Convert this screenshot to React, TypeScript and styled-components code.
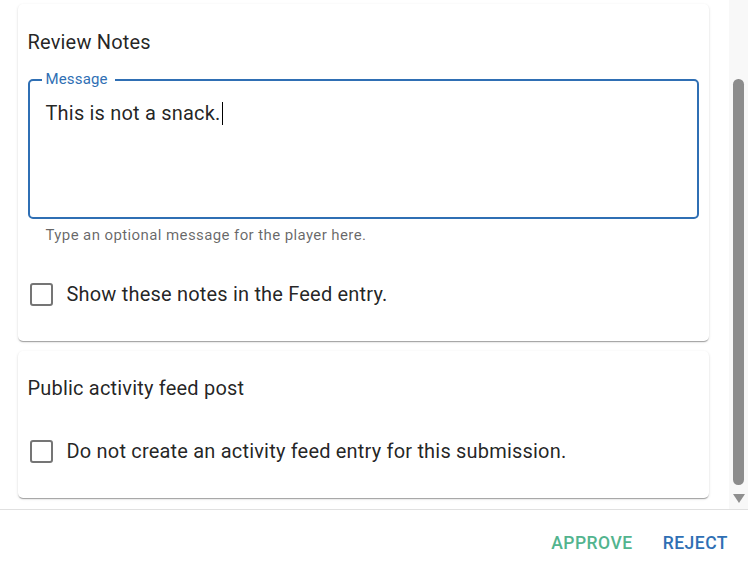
import styled, { createGlobalStyle } from 'styled-components';

const GlobalStyle = createGlobalStyle`
	html, body {
		margin: 0;
		height: 564px;
		overflow: hidden;
		background: #fff;
		font-family: Roboto, 'Liberation Sans', sans-serif;
		color: rgba(0, 0, 0, 0.87);
	}
`;

const BLUE = '#2f6fb4';
const GREEN = '#52b48e';

const Dialog = styled.div`
	display: flex;
	flex-direction: column;
	height: 564px;
`;

const Body = styled.div`
	display: flex;
	height: 509px;
	flex-shrink: 0;
`;

const Content = styled.div`
	flex: 1;
	display: flex;
	flex-direction: column;
	gap: 10px;
	padding: 4px 20.5px 0 17.5px;
	overflow: hidden;
`;

const Card = styled.section`
	background: #fff;
	border-radius: 5px;
	padding: 22.5px 10px 20.5px;
	box-shadow: 0 2px 1px -1px rgba(0, 0, 0, 0.2), 0 1px 1px 0 rgba(0, 0, 0, 0.14),
		0 1px 3px 0 rgba(0, 0, 0, 0.12);
`;

const Heading = styled.h2`
	margin: 0 0 22px;
	font-size: 20px;
	font-weight: 400;
	line-height: 30px;
	letter-spacing: 0.19px;
`;

const Field = styled.div`
	position: relative;
	box-sizing: border-box;
	height: 140.5px;
	border: 2px solid ${BLUE};
	border-radius: 5px;
	padding: 18px 16px;
`;

const FieldLabel = styled.label`
	position: absolute;
	top: -9px;
	left: 12px;
	padding: 0 7px 0 4px;
	background: #fff;
	color: ${BLUE};
	font-size: 15px;
	line-height: 15px;
	letter-spacing: 0.15px;
`;

const InputText = styled.div`
	font-size: 20px;
	line-height: 29px;
	letter-spacing: 0.19px;
`;

const Caret = styled.span`
	display: inline-block;
	width: 1px;
	height: 23px;
	margin-left: 1.5px;
	vertical-align: -5px;
	background: #000;
`;

const Helper = styled.p`
	margin: 4.4px 0 20px 18px;
	font-size: 15px;
	line-height: 25px;
	letter-spacing: 0.4px;
	color: rgba(0, 0, 0, 0.6);
`;

const CheckRow = styled.label`
	display: flex;
	align-items: center;
	height: 52px;
	padding-left: 2.5px;
	font-size: 20px;
	line-height: 30px;
	letter-spacing: 0.19px;
`;

const Box = styled.span`
	box-sizing: border-box;
	width: 22.5px;
	height: 22.5px;
	border: 2.5px solid #757575;
	border-radius: 3px;
	margin-right: 14px;
	flex-shrink: 0;
`;

const ScrollTrack = styled.div`
	width: 19px;
	background: #f8f8f8;
	display: flex;
	flex-direction: column;
	align-items: center;
`;

const Thumb = styled.div`
	margin-top: 79px;
	width: 10.5px;
	height: 406px;
	border-radius: 5.25px;
	background: #8c8c8c;
`;

const DownArrow = styled.div`
	margin-top: 9px;
	width: 0;
	height: 0;
	border-left: 6.5px solid transparent;
	border-right: 6.5px solid transparent;
	border-top: 9px solid #8f8f8f;
`;

const Footer = styled.div`
	display: flex;
	justify-content: flex-end;
	gap: 10px;
	padding: 10px;
	border-top: 1px solid #e0e0e0;
`;

const ActionButton = styled.button<{ $tone: 'approve' | 'reject' }>`
	border: 0;
	background: none;
	height: 45.5px;
	padding: 7.5px 10px;
	font-family: Roboto, 'Liberation Sans', sans-serif;
	font-size: 17.5px;
	font-weight: 500;
	letter-spacing: 0.5px;
	text-transform: uppercase;
	color: ${(p) => (p.$tone === 'approve' ? GREEN : BLUE)};
	cursor: pointer;
`;

const App = () => {
	return (
		<>
			<GlobalStyle />
			<Dialog>
				<Body>
					<Content>
						<Card>
							<Heading>Review Notes</Heading>
							<Field>
								<FieldLabel>Message</FieldLabel>
								<InputText>
									This is not a snack.
									<Caret />
								</InputText>
							</Field>
							<Helper>Type an optional message for the player here.</Helper>
							<CheckRow>
								<Box />
								Show these notes in the Feed entry.
							</CheckRow>
						</Card>
						<Card>
							<Heading>Public activity feed post</Heading>
							<CheckRow>
								<Box />
								Do not create an activity feed entry for this submission.
							</CheckRow>
						</Card>
					</Content>
					<ScrollTrack>
						<Thumb />
						<DownArrow />
					</ScrollTrack>
				</Body>
				<Footer>
					<ActionButton $tone="approve">Approve</ActionButton>
					<ActionButton $tone="reject">Reject</ActionButton>
				</Footer>
			</Dialog>
		</>
	);
};

export default App;
